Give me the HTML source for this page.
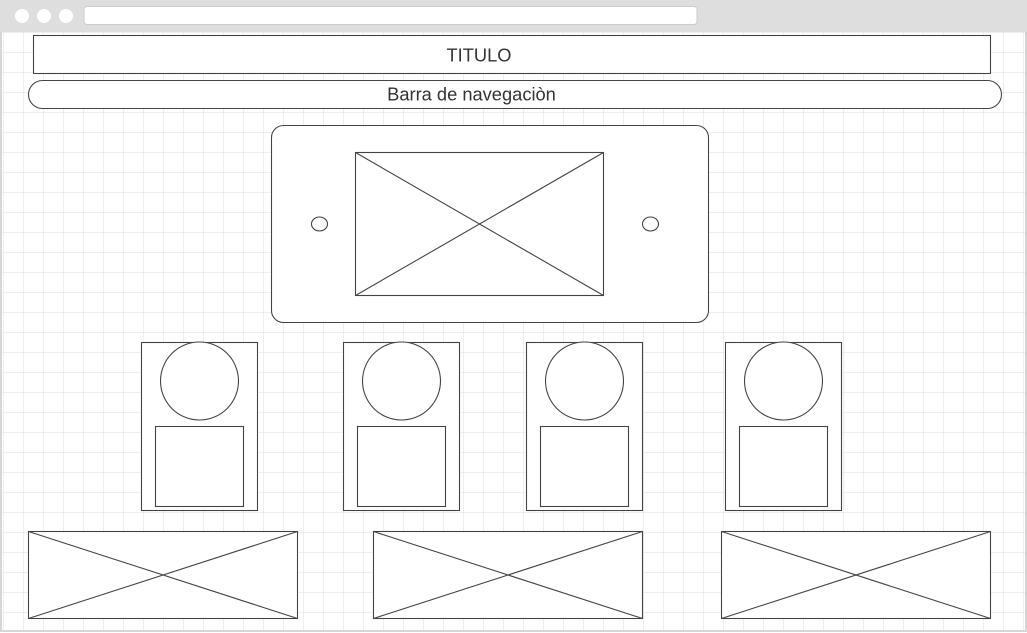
<!DOCTYPE html>
<html><head><style>html,body{margin:0;padding:0;background:#fff}svg{display:block}</style></head><body>
<svg width="1027" height="633" xmlns="http://www.w3.org/2000/svg">
<defs><pattern id="g" x="3" y="12" width="20" height="20" patternUnits="userSpaceOnUse"><path d="M0 0H20M0 0V20" stroke="#dcdcdc" stroke-width="1" fill="none"/></pattern></defs>
<rect x="0" y="0" width="1027" height="633" fill="#fff"/>
<rect x="2" y="31" width="1023" height="599" fill="url(#g)"/>
<rect x="1" y="0" width="1025" height="631" fill="none" stroke="#d6d6d6" stroke-width="2"/>
<rect x="0" y="0" width="1027" height="32" fill="#dedede"/>
<circle cx="22" cy="16" r="7" fill="#fff"/><circle cx="44" cy="16" r="7" fill="#fff"/><circle cx="66" cy="16" r="7" fill="#fff"/>
<rect x="84" y="6.5" width="613" height="18" rx="3" fill="#fff" stroke="#ccc"/>
<g fill="#fff" stroke="#444" stroke-width="1.1">
<rect x="33.5" y="35.5" width="957" height="38"/>
<rect x="28.5" y="80.5" width="973" height="28" rx="14"/>
<rect x="271.5" y="125.5" width="437" height="197" rx="12"/>
<rect x="355.5" y="152.5" width="248" height="143"/>
<path d="M355.5 152.5L603.5 295.5M603.5 152.5L355.5 295.5"/>
<ellipse cx="319.5" cy="224" rx="8" ry="7"/><ellipse cx="650.5" cy="224" rx="8" ry="7"/>
<g id="c"><rect x="141.5" y="342.5" width="116" height="168"/><circle cx="199.5" cy="381" r="39"/><rect x="155.5" y="426.5" width="88" height="80"/></g>
<use href="#c" x="202"/><use href="#c" x="385"/><use href="#c" x="584"/>
<g id="b"><rect x="28.5" y="531.5" width="269" height="87"/><path d="M28.5 531.5L297.5 618.5M297.5 531.5L28.5 618.5"/></g>
<use href="#b" x="345"/><use href="#b" x="693"/>
</g>
<g font-family="Liberation Sans, sans-serif" font-size="18.3" fill="#333" text-anchor="middle">
<text x="479" y="61.5">TITULO</text>
<text x="471.5" y="100.5">Barra de navegaciòn</text>
</g>
</svg>
</body></html>
